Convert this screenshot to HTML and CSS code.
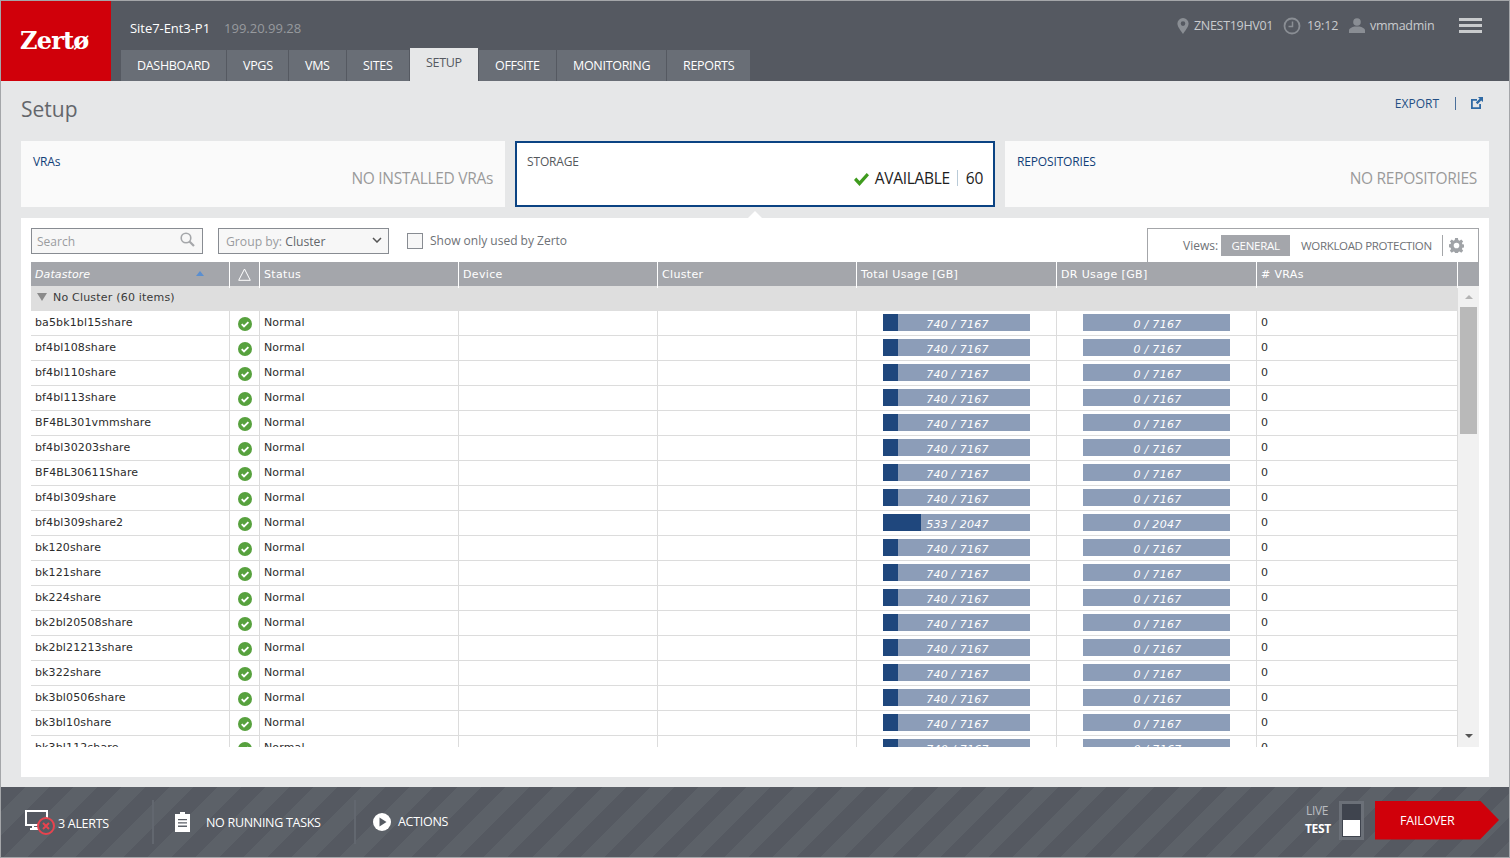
FILE: index.html
```html
<!DOCTYPE html>
<html lang="en">
<head>
<meta charset="utf-8">
<title>Zerto - Setup</title>
<link rel="stylesheet" href="styles.css">
</head>
<body>
<div class="app">
  <header class="topbar">
    <div class="logo">Zertø</div>
    <div class="topbar-main">
      <div class="topbar-info">
        <span class="site-name">Site7-Ent3-P1</span>
        <span class="site-ip">199.20.99.28</span>
      </div>
      <nav class="tabs">
        <a class="tab">DASHBOARD</a>
        <a class="tab">VPGS</a>
        <a class="tab">VMS</a>
        <a class="tab">SITES</a>
        <a class="tab tab-active">SETUP</a>
        <a class="tab">OFFSITE</a>
        <a class="tab">MONITORING</a>
        <a class="tab">REPORTS</a>
      </nav>
    </div>
    <div class="topbar-meta">
      <svg class="icon-pin" viewBox="0 0 12 16"><path fill="#8a8e94" fill-rule="evenodd" d="M6 0a5.6 5.6 0 0 1 5.6 5.6C11.600 9 8 13 6 16 4 13 .4 9 .4 5.600A5.600 5.600 0 0 1 6 0zm0 3.300a2.300 2.300 0 1 0 0 4.600 2.300 2.300 0 0 0 0-4.600z"/></svg>
      <span class="meta-host">ZNEST19HV01</span>
      <svg class="icon-clock" viewBox="0 0 18 18"><circle cx="9" cy="9" r="7.500" fill="none" stroke="#8a8e94" stroke-width="1.800"/><path d="M9.500 4.500V9.500H5.500" fill="none" stroke="#8a8e94" stroke-width="1.500"/></svg>
      <span class="meta-time">19:12</span>
      <svg class="icon-user" viewBox="0 0 16 15"><circle cx="8" cy="4" r="3.800" fill="#8a8e94"/><path fill="#8a8e94" d="M0 15v-2.500C0 10.500 3 9 5.500 8.500h5C13 9 16 10.500 16 12.500V15z"/></svg>
      <span class="meta-user">vmmadmin</span>
      <div class="hamburger"><i></i><i></i><i></i></div>
    </div>
  </header>

  <main class="content">
    <div class="page-head">
      <h1 class="page-title">Setup</h1>
      <div class="export">
        <span class="export-label">EXPORT</span>
        <span class="export-sep"></span>
        <svg class="icon-export" viewBox="0 0 12 12"><path fill="#2f6aa5" d="M0 2h6v1.800H1.800v6.400h6.400V7H10v5H0z"/><path fill="#2f6aa5" d="M7 0h5v5l-1.800-1.600L6.500 7.200 4.800 5.500l3.800-3.800z"/></svg>
      </div>
    </div>

    <section class="cards">
      <div class="card">
        <div class="card-title">VRAs</div>
        <div class="card-value">NO INSTALLED VRAs</div>
      </div>
      <div class="card card-active">
        <div class="card-title">STORAGE</div>
        <div class="card-value card-value-dark">
          <svg class="icon-check" viewBox="0 0 15 13"><path fill="#3f9b1e" d="M0 7l2.300-2.400L5.500 8 12.700 0 15 2.200 5.500 13z"/></svg>
          <span>AVAILABLE</span><span class="card-sep"></span><span>60</span>
        </div>
      </div>
      <div class="card">
        <div class="card-title">REPOSITORIES</div>
        <div class="card-value">NO REPOSITORIES</div>
      </div>
    </section>

    <section class="panel">
      <div class="toolbar">
        <div class="search">
          <span>Search</span>
          <svg class="icon-search" viewBox="0 0 15 15"><circle cx="6" cy="6" r="4.800" fill="none" stroke="#a5a7aa" stroke-width="1.600"/><path d="M9.500 9.500L14 14" stroke="#a5a7aa" stroke-width="2.200"/></svg>
        </div>
        <div class="select">
          <span class="select-label">Group by: <b>Cluster</b></span>
          <svg class="icon-chevron" viewBox="0 0 10 6"><path d="M1 1l4 4 4-4" fill="none" stroke="#555" stroke-width="1.500"/></svg>
        </div>
        <span class="checkbox"></span>
        <span class="checkbox-label">Show only used by Zerto</span>
        <div class="views">
          <span class="views-label">Views:</span>
          <span class="view view-active">GENERAL</span>
          <span class="view">WORKLOAD PROTECTION</span>
          <span class="views-sep"></span>
          <svg class="icon-gear" viewBox="0 0 16 16"><path fill="#a0a3a7" fill-rule="evenodd" d="M6.500 0h3l.4 2.200 1.300.6L13.100 1.500l2 2.100-1.300 1.800.5 1.300 2.200.4v3l-2.200.4-.5 1.300 1.300 1.800-2 2.100-1.900-1.300-1.300.5-.4 2.200h-3l-.4-2.200-1.300-.5-1.900 1.300-2-2.100 1.300-1.800-.5-1.300L-.500 9.800V6.800l2.200-.4.500-1.300L.900 3.600l2-2.100 1.900 1.300 1.300-.6zM8 5a3 3 0 1 0 0 6 3 3 0 0 0 0-6z"/></svg>
        </div>
      </div>

      <div class="table-head">
        <div class="th th-sort"><em>Datastore</em><i class="sort-arrow"></i></div>
        <div class="th th-icon"><svg class="icon-alert" viewBox="0 0 13 13"><path d="M6.500 1L12.300 12.300H.7z" fill="none" stroke="#fff" stroke-width="1"/></svg></div>
        <div class="th">Status</div>
        <div class="th">Device</div>
        <div class="th">Cluster</div>
        <div class="th">Total Usage [GB]</div>
        <div class="th">DR Usage [GB]</div>
        <div class="th"># VRAs</div>
        <div class="th th-last"></div>
      </div>

      <div class="table-body">
        <div class="rows">
          <div class="group-row"><i class="group-arrow"></i>No Cluster (60 items)</div>
          <div class="row"><div class="td">ba5bk1bl15share</div><div class="td td-icon"><svg class="ok" viewBox="0 0 14 14"><circle cx="7" cy="7" r="7"/><path d="M3.700 7.200l2.300 2.300 4.400-4.400"/></svg></div><div class="td">Normal</div><div class="td"></div><div class="td"></div><div class="td"><div class="bar"><div class="fill" style="width:15px"></div><span class="bar-text">740 / 7167</span></div></div><div class="td"><div class="bar"><span class="bar-text">0 / 7167</span></div></div><div class="td">0</div></div>
          <div class="row"><div class="td">bf4bl108share</div><div class="td td-icon"><svg class="ok" viewBox="0 0 14 14"><circle cx="7" cy="7" r="7"/><path d="M3.700 7.200l2.300 2.300 4.400-4.400"/></svg></div><div class="td">Normal</div><div class="td"></div><div class="td"></div><div class="td"><div class="bar"><div class="fill" style="width:15px"></div><span class="bar-text">740 / 7167</span></div></div><div class="td"><div class="bar"><span class="bar-text">0 / 7167</span></div></div><div class="td">0</div></div>
          <div class="row"><div class="td">bf4bl110share</div><div class="td td-icon"><svg class="ok" viewBox="0 0 14 14"><circle cx="7" cy="7" r="7"/><path d="M3.700 7.200l2.300 2.300 4.400-4.400"/></svg></div><div class="td">Normal</div><div class="td"></div><div class="td"></div><div class="td"><div class="bar"><div class="fill" style="width:15px"></div><span class="bar-text">740 / 7167</span></div></div><div class="td"><div class="bar"><span class="bar-text">0 / 7167</span></div></div><div class="td">0</div></div>
          <div class="row"><div class="td">bf4bl113share</div><div class="td td-icon"><svg class="ok" viewBox="0 0 14 14"><circle cx="7" cy="7" r="7"/><path d="M3.700 7.200l2.300 2.300 4.400-4.400"/></svg></div><div class="td">Normal</div><div class="td"></div><div class="td"></div><div class="td"><div class="bar"><div class="fill" style="width:15px"></div><span class="bar-text">740 / 7167</span></div></div><div class="td"><div class="bar"><span class="bar-text">0 / 7167</span></div></div><div class="td">0</div></div>
          <div class="row"><div class="td">BF4BL301vmmshare</div><div class="td td-icon"><svg class="ok" viewBox="0 0 14 14"><circle cx="7" cy="7" r="7"/><path d="M3.700 7.200l2.300 2.300 4.400-4.400"/></svg></div><div class="td">Normal</div><div class="td"></div><div class="td"></div><div class="td"><div class="bar"><div class="fill" style="width:15px"></div><span class="bar-text">740 / 7167</span></div></div><div class="td"><div class="bar"><span class="bar-text">0 / 7167</span></div></div><div class="td">0</div></div>
          <div class="row"><div class="td">bf4bl30203share</div><div class="td td-icon"><svg class="ok" viewBox="0 0 14 14"><circle cx="7" cy="7" r="7"/><path d="M3.700 7.200l2.300 2.300 4.400-4.400"/></svg></div><div class="td">Normal</div><div class="td"></div><div class="td"></div><div class="td"><div class="bar"><div class="fill" style="width:15px"></div><span class="bar-text">740 / 7167</span></div></div><div class="td"><div class="bar"><span class="bar-text">0 / 7167</span></div></div><div class="td">0</div></div>
          <div class="row"><div class="td">BF4BL30611Share</div><div class="td td-icon"><svg class="ok" viewBox="0 0 14 14"><circle cx="7" cy="7" r="7"/><path d="M3.700 7.200l2.300 2.300 4.400-4.400"/></svg></div><div class="td">Normal</div><div class="td"></div><div class="td"></div><div class="td"><div class="bar"><div class="fill" style="width:15px"></div><span class="bar-text">740 / 7167</span></div></div><div class="td"><div class="bar"><span class="bar-text">0 / 7167</span></div></div><div class="td">0</div></div>
          <div class="row"><div class="td">bf4bl309share</div><div class="td td-icon"><svg class="ok" viewBox="0 0 14 14"><circle cx="7" cy="7" r="7"/><path d="M3.700 7.200l2.300 2.300 4.400-4.400"/></svg></div><div class="td">Normal</div><div class="td"></div><div class="td"></div><div class="td"><div class="bar"><div class="fill" style="width:15px"></div><span class="bar-text">740 / 7167</span></div></div><div class="td"><div class="bar"><span class="bar-text">0 / 7167</span></div></div><div class="td">0</div></div>
          <div class="row"><div class="td">bf4bl309share2</div><div class="td td-icon"><svg class="ok" viewBox="0 0 14 14"><circle cx="7" cy="7" r="7"/><path d="M3.700 7.200l2.300 2.300 4.400-4.400"/></svg></div><div class="td">Normal</div><div class="td"></div><div class="td"></div><div class="td"><div class="bar"><div class="fill" style="width:38px"></div><span class="bar-text">533 / 2047</span></div></div><div class="td"><div class="bar"><span class="bar-text">0 / 2047</span></div></div><div class="td">0</div></div>
          <div class="row"><div class="td">bk120share</div><div class="td td-icon"><svg class="ok" viewBox="0 0 14 14"><circle cx="7" cy="7" r="7"/><path d="M3.700 7.200l2.300 2.300 4.400-4.400"/></svg></div><div class="td">Normal</div><div class="td"></div><div class="td"></div><div class="td"><div class="bar"><div class="fill" style="width:15px"></div><span class="bar-text">740 / 7167</span></div></div><div class="td"><div class="bar"><span class="bar-text">0 / 7167</span></div></div><div class="td">0</div></div>
          <div class="row"><div class="td">bk121share</div><div class="td td-icon"><svg class="ok" viewBox="0 0 14 14"><circle cx="7" cy="7" r="7"/><path d="M3.700 7.200l2.300 2.300 4.400-4.400"/></svg></div><div class="td">Normal</div><div class="td"></div><div class="td"></div><div class="td"><div class="bar"><div class="fill" style="width:15px"></div><span class="bar-text">740 / 7167</span></div></div><div class="td"><div class="bar"><span class="bar-text">0 / 7167</span></div></div><div class="td">0</div></div>
          <div class="row"><div class="td">bk224share</div><div class="td td-icon"><svg class="ok" viewBox="0 0 14 14"><circle cx="7" cy="7" r="7"/><path d="M3.700 7.200l2.300 2.300 4.400-4.400"/></svg></div><div class="td">Normal</div><div class="td"></div><div class="td"></div><div class="td"><div class="bar"><div class="fill" style="width:15px"></div><span class="bar-text">740 / 7167</span></div></div><div class="td"><div class="bar"><span class="bar-text">0 / 7167</span></div></div><div class="td">0</div></div>
          <div class="row"><div class="td">bk2bl20508share</div><div class="td td-icon"><svg class="ok" viewBox="0 0 14 14"><circle cx="7" cy="7" r="7"/><path d="M3.700 7.200l2.300 2.300 4.400-4.400"/></svg></div><div class="td">Normal</div><div class="td"></div><div class="td"></div><div class="td"><div class="bar"><div class="fill" style="width:15px"></div><span class="bar-text">740 / 7167</span></div></div><div class="td"><div class="bar"><span class="bar-text">0 / 7167</span></div></div><div class="td">0</div></div>
          <div class="row"><div class="td">bk2bl21213share</div><div class="td td-icon"><svg class="ok" viewBox="0 0 14 14"><circle cx="7" cy="7" r="7"/><path d="M3.700 7.200l2.300 2.300 4.400-4.400"/></svg></div><div class="td">Normal</div><div class="td"></div><div class="td"></div><div class="td"><div class="bar"><div class="fill" style="width:15px"></div><span class="bar-text">740 / 7167</span></div></div><div class="td"><div class="bar"><span class="bar-text">0 / 7167</span></div></div><div class="td">0</div></div>
          <div class="row"><div class="td">bk322share</div><div class="td td-icon"><svg class="ok" viewBox="0 0 14 14"><circle cx="7" cy="7" r="7"/><path d="M3.700 7.200l2.300 2.300 4.400-4.400"/></svg></div><div class="td">Normal</div><div class="td"></div><div class="td"></div><div class="td"><div class="bar"><div class="fill" style="width:15px"></div><span class="bar-text">740 / 7167</span></div></div><div class="td"><div class="bar"><span class="bar-text">0 / 7167</span></div></div><div class="td">0</div></div>
          <div class="row"><div class="td">bk3bl0506share</div><div class="td td-icon"><svg class="ok" viewBox="0 0 14 14"><circle cx="7" cy="7" r="7"/><path d="M3.700 7.200l2.300 2.300 4.400-4.400"/></svg></div><div class="td">Normal</div><div class="td"></div><div class="td"></div><div class="td"><div class="bar"><div class="fill" style="width:15px"></div><span class="bar-text">740 / 7167</span></div></div><div class="td"><div class="bar"><span class="bar-text">0 / 7167</span></div></div><div class="td">0</div></div>
          <div class="row"><div class="td">bk3bl10share</div><div class="td td-icon"><svg class="ok" viewBox="0 0 14 14"><circle cx="7" cy="7" r="7"/><path d="M3.700 7.200l2.300 2.300 4.400-4.400"/></svg></div><div class="td">Normal</div><div class="td"></div><div class="td"></div><div class="td"><div class="bar"><div class="fill" style="width:15px"></div><span class="bar-text">740 / 7167</span></div></div><div class="td"><div class="bar"><span class="bar-text">0 / 7167</span></div></div><div class="td">0</div></div>
          <div class="row"><div class="td">bk3bl112share</div><div class="td td-icon"><svg class="ok" viewBox="0 0 14 14"><circle cx="7" cy="7" r="7"/><path d="M3.700 7.200l2.300 2.300 4.400-4.400"/></svg></div><div class="td">Normal</div><div class="td"></div><div class="td"></div><div class="td"><div class="bar"><div class="fill" style="width:15px"></div><span class="bar-text">740 / 7167</span></div></div><div class="td"><div class="bar"><span class="bar-text">0 / 7167</span></div></div><div class="td">0</div></div>
        </div>
        <div class="scrollbar">
          <i class="scroll-up"></i>
          <div class="scroll-thumb"></div>
          <i class="scroll-down"></i>
        </div>
      </div>
    </section>
  </main>

  <footer class="bottombar">
    <div class="foot-item foot-alerts">
      <svg class="icon-alerts" viewBox="0 0 31 26"><path fill="none" stroke="#fff" stroke-width="2" d="M14 15H1V1H22v7M8 15v3h6M5 19h9" /><circle cx="21" cy="16" r="8" fill="#555a62" stroke="#e8434e" stroke-width="2"/><path d="M18 13l6 6M24 13l-6 6" stroke="#e8434e" stroke-width="2"/></svg>
      <span>3 ALERTS</span>
    </div>
    <div class="foot-item foot-tasks">
      <svg class="icon-tasks" viewBox="0 0 15 20"><path fill="#fff" fill-rule="evenodd" d="M5 2V0h5v2h5v18H0V2zM3 7v1.300h9V7zm0 3.300v1.300h9v-1.300zm0 3.300v1.300h9v-1.300z"/></svg>
      <span>NO RUNNING TASKS</span>
    </div>
    <div class="foot-item foot-actions">
      <svg class="icon-play" viewBox="0 0 18 18"><circle cx="9" cy="9" r="9" fill="#fff"/><path d="M6.500 4.500l7 4.500-7 4.500z" fill="#555a62"/></svg>
      <span>ACTIONS</span>
    </div>
    <div class="mode">
      <div class="mode-labels"><span class="mode-live">LIVE</span><span class="mode-test">TEST</span></div>
      <div class="mode-switch"><i></i></div>
      <div class="failover">FAILOVER</div>
    </div>
  </footer>
</div>
</body>
</html>
```
FILE: styles.css
```css
* { box-sizing: border-box; }
html, body { margin: 0; padding: 0; }
body { width: 1510px; height: 858px; overflow: hidden; background: #e6e7e8; font-family: "Open Sans", "Liberation Sans", sans-serif; }
.app { width: 1510px; height: 858px; border: 1px solid #a4a6a9; display: flex; flex-direction: column; }

.topbar { height: 80px; flex: none; background: #555961; display: flex; }
.logo { width: 110px; flex: none; background: #d0000a; color: #fff; font-family: "DejaVu Serif", serif; font-weight: 700; font-size: 24px; letter-spacing: -.8px; padding: 24px 0 0 19px; line-height: 32px; }
.topbar-main { flex: 1; display: flex; flex-direction: column; padding-left: 10px; }
.topbar-info { height: 47px; padding: 18px 0 0 9px; line-height: 18px; font-size: 13px; letter-spacing: -.05px; display: flex; gap: 14px; }
.site-name { color: #fff; }
.site-ip { color: #979a9e; letter-spacing: 0; }
.tabs { display: flex; gap: 1px; align-items: flex-end; height: 33px; }
.tab { display: block; height: 31px; background: #696e76; color: #fff; font-size: 12.500px; letter-spacing: -.3px; line-height: 32px; padding: 0 16px; }
.tab:nth-child(1) { width: 105px; }
.tab:nth-child(2) { width: 61px; }
.tab:nth-child(3) { width: 57px; }
.tab:nth-child(4) { width: 62px; }
.tab:nth-child(5) { width: 68px; }
.tab:nth-child(6) { width: 77px; }
.tab:nth-child(7) { width: 109px; }
.tab:nth-child(8) { width: 83px; }
.tab-active { height: 33px; background: #e6e7e8; color: #555961; line-height: 29px; }
.topbar-meta { position: absolute; top: 17px; right: 28px; height: 17px; display: flex; align-items: center; color: #c9cbce; font-size: 12.500px; }
.icon-pin { width: 12px; height: 16px; margin-right: 5px; }
.meta-host { letter-spacing: -.3px; width: 79px; margin-right: 10px; white-space: nowrap; }
.icon-clock { width: 18px; height: 18px; margin-right: 6px; }
.meta-time { width: 31px; margin-right: 11px; letter-spacing: -.1px; }
.icon-user { width: 16px; height: 15px; margin-right: 5px; }
.meta-user { width: 64px; margin-right: 25px; letter-spacing: -.25px; }
.hamburger { width: 23px; height: 15px; display: flex; flex-direction: column; justify-content: space-between; }
.hamburger i { display: block; height: 3px; background: #c9cbcd; }

.content { flex: 1; display: flex; flex-direction: column; padding: 0 20px 10px; min-height: 0; }
.page-head { height: 60px; flex: none; display: flex; justify-content: space-between; }
.page-title { margin: 13px 0 0; font-size: 21px; font-weight: 400; line-height: 30px; color: #63666b; }
.export { display: flex; align-items: center; height: 16px; margin-top: 14px; padding-right: 6px; color: #234f85; font-size: 12px; }
.export-sep { width: 1px; height: 13px; background: #4a6f9a; margin: 0 15px 0 16px; }
.icon-export { width: 12px; height: 12px; }

.cards { display: flex; gap: 10px; height: 66px; flex: none; }
.card { flex: 1; background: #fafafa; padding: 12px 12px 0; }
.card-title { font-size: 12px; line-height: 18px; color: #123f78; letter-spacing: -.15px; }
.card-value { font-size: 15.500px; line-height: 22px; text-align: right; color: #9a9a9a; margin-top: -4px; letter-spacing: -.3px; display: flex; justify-content: flex-end; align-items: center; }
.card-active { flex: none; width: 480px; background: #fff; border: 2px solid #0b4383; padding: 10px 10px 0; }
.card-active .card-title { color: #55585c; }
.card-value-dark { color: #1d1d1d; }
.icon-check { width: 15px; height: 13px; margin-right: 6px; margin-top: 2px; }
.card-sep { width: 1px; height: 16px; background: #b9cbd8; margin: 0 8px 0 7px; }

.panel { position: relative; flex: 1; margin-top: 11px; background: #fff; padding: 10px 10px 30px; display: flex; flex-direction: column; min-height: 0; }
.panel::before { content: ""; position: absolute; top: -7px; left: 727px; border-left: 7px solid transparent; border-right: 7px solid transparent; border-bottom: 7px solid #fff; }

.toolbar { height: 34px; flex: none; display: flex; align-items: flex-start; font-family: "Open Sans", sans-serif; font-size: 12px; color: #9a9c9f; }
.search, .select { height: 26px; border: 1px solid #888c92; background: #f7f7f7; display: flex; align-items: center; justify-content: space-between; }
.search { width: 172px; padding: 1px 7px 0 5px; }
.icon-search { width: 15px; height: 15px; margin-top: -4px; }
.select { width: 171px; margin-left: 15px; padding: 1px 6px 0 7px; }
.select-label { font-size: 12.200px; }
.select-label b { font-weight: 400; color: #63666b; }
.icon-chevron { width: 10px; height: 6px; margin-top: -3px; }
.checkbox { width: 16px; height: 16px; border: 1px solid #888c92; background: #f7f7f7; margin: 5px 0 0 18px; }
.checkbox-label { margin: 4px 0 0 7px; line-height: 18px; color: #6e7176; font-size: 12px; }
.views { margin-left: auto; width: 332px; height: 34px; border: 1px solid #a4a6a9; border-bottom: 0; display: flex; align-items: center; padding: 0 14px 0 35px; color: #6e7176; font-size: 12px; }
.views-label { margin-right: 3px; flex: none; }
.view { flex: none; height: 21px; font-size: 11.500px; line-height: 22px; padding: 0 11px; letter-spacing: -.35px; white-space: nowrap; }
.view-active { width: 69px; padding: 0; text-align: center; background: #a4a6ab; color: #fff; letter-spacing: -.25px; }
.views-sep { flex: none; width: 1px; height: 21px; background: #a4a6a9; margin: 0 6px 0 -1px; }
.icon-gear { flex: none; width: 15px; height: 15px; }

.table-head { display: grid; grid-template-columns: 199px 30px 199px 199px 199px 200px 200px 201px 21px; height: 24px; flex: none; background: #a4a6ab; color: #fff; font-family: "DejaVu Sans", sans-serif; font-size: 11px; letter-spacing: .35px; line-height: 26px; }
.th { padding-left: 4px; border-right: 1px solid #fff; position: relative; }
.th em { font-style: italic; letter-spacing: .1px; }
.th-last { border-right: 0; }
.th-icon { padding: 6px 0 0 8px; }
.icon-alert { display: block; width: 13px; height: 13px; }
.sort-arrow { position: absolute; left: 165px; top: 9px; border-left: 4px solid transparent; border-right: 4px solid transparent; border-bottom: 5px solid #5a8fd0; }

.table-body { flex: 1; display: flex; min-height: 0; overflow: hidden; font-family: "DejaVu Sans", sans-serif; font-size: 11px; letter-spacing: .13px; color: #2c2c2c; }
.rows { width: 1427px; flex: none; }
.group-row { height: 25px; background: #dedede; line-height: 24px; padding-left: 6px; display: flex; align-items: flex-start; color: #3a3a3a; letter-spacing: .2px; }
.group-arrow { margin: 7px 6px 0 0; border-left: 5px solid transparent; border-right: 5px solid transparent; border-top: 8px solid #8a8a8a; }
.row { display: grid; grid-template-columns: 199px 30px 199px 199px 199px 200px 200px 201px; height: 25px; border-bottom: 1px solid #dcdcdc; }
.td { padding: 0 0 0 4px; border-right: 1px solid #dcdcdc; line-height: 24px; }
.td-icon { padding: 6px 0 0 8px; }
.ok { display: block; width: 14px; height: 14px; }
.ok circle { fill: #57a13e; }
.ok path { fill: none; stroke: #fff; stroke-width: 1.800; }
.bar { position: relative; width: 147px; height: 17px; margin: 3px 0 0 22px; padding-left: 2px; background: #8c9db8; text-align: center; line-height: 22px; }
.fill { position: absolute; left: 0; top: 0; height: 17px; background: #1f477d; }
.bar-text { position: relative; color: #fff; font-style: italic; line-height: 20px; letter-spacing: .3px; }

.scrollbar { width: 21px; flex: none; background: #f1f1f1; position: relative; padding-top: 21px; }
.scroll-thumb { width: 17px; height: 127px; margin-left: 2px; background: #b9b9b9; }
.scroll-up { position: absolute; left: 7px; top: 9px; border-left: 4px solid transparent; border-right: 4px solid transparent; border-bottom: 4px solid #b4b4b4; }
.scroll-down { position: absolute; left: 7px; bottom: 9px; border-left: 4px solid transparent; border-right: 4px solid transparent; border-top: 4px solid #555; }

.bottombar { height: 70px; flex: none; display: flex; align-items: center; color: #fff; font-size: 12.500px; letter-spacing: -.3px; background: repeating-linear-gradient(135deg, #555961 0, #555961 17px, #5c6168 17px, #5c6168 34px); }
.foot-item { height: 44px; display: flex; align-items: center; border-right: 2px solid #62676f; }
.foot-alerts { width: 153px; padding-left: 24px; }
.icon-alerts { width: 31px; height: 26px; margin-right: 2px; margin-top: 2px; }
.foot-alerts span { margin-top: 2px; }
.foot-tasks { width: 202px; padding-left: 21px; }
.icon-tasks { width: 15px; height: 20px; margin-right: 16px; }
.foot-actions { border-right: 0; padding-left: 17px; }
.icon-play { width: 18px; height: 18px; margin-right: 7px; }
.foot-actions span { margin-top: -2px; }
.mode { margin-left: auto; display: flex; align-items: center; margin-right: 10px; margin-bottom: 4px; }
.mode-labels { display: flex; flex-direction: column; align-items: flex-start; font-size: 12px; width: 34px; letter-spacing: -.35px; line-height: 18px; }
.mode-live { color: #b9bcc0; margin-left: 1px; }
.mode-test { font-weight: 700; }
.mode-switch { width: 25px; height: 39px; border: 3px solid #6b7078; background: #3f444e; margin-right: 11px; display: flex; align-items: flex-end; padding: 0 1px 1px; }
.mode-switch i { display: block; width: 17px; height: 16px; background: #fff; }
.failover { width: 124px; height: 39px; background: #d0000a; clip-path: polygon(0 0, 105px 0, 124px 19.500px, 105px 39px, 0 39px); line-height: 39px; padding-left: 25px; letter-spacing: -.2px; }
```
